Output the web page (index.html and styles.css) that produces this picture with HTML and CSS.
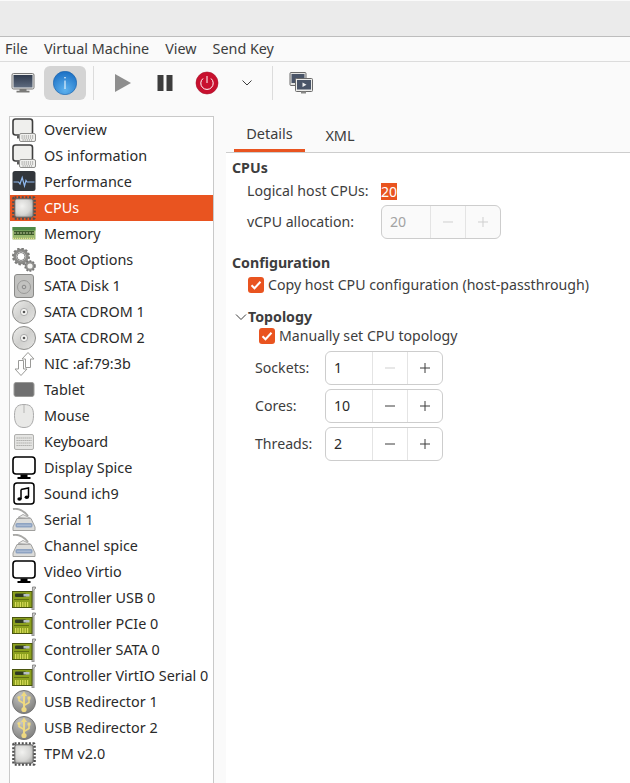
FILE: index.html
```html
<!DOCTYPE html>
<html lang="en">
<head>
<meta charset="utf-8">
<title>Virtual Machine</title>
<link rel="stylesheet" href="styles.css">
</head>
<body>
<svg class="sprite" width="0" height="0">
<defs>
<radialGradient id="gchip" cx=".4" cy=".4" r=".75"><stop offset="0" stop-color="#f2f2f0"/><stop offset=".6" stop-color="#d6d6d4"/><stop offset="1" stop-color="#9f9f9d"/></radialGradient>
<linearGradient id="gdisc" x1="0" y1="0" x2="1" y2="1"><stop offset="0" stop-color="#eeeeec"/><stop offset=".5" stop-color="#d0d0ce"/><stop offset="1" stop-color="#e6e6e4"/></linearGradient>
<linearGradient id="gscreen" x1="0" y1="0" x2="0" y2="1"><stop offset="0" stop-color="#2f3a4d"/><stop offset="1" stop-color="#5d6a7e"/></linearGradient>
<radialGradient id="ginfo" cx=".5" cy=".8" r=".8"><stop offset="0" stop-color="#5fb2ee"/><stop offset="1" stop-color="#1a6fc4"/></radialGradient>
<radialGradient id="gusb" cx=".4" cy=".25" r=".85"><stop offset="0" stop-color="#c6c6c4"/><stop offset="1" stop-color="#787876"/></radialGradient>
<symbol id="i-computer" viewBox="0 0 24 24">
<rect x="1" y="1" width="19.500" height="16" rx="2.500" fill="#efefed" stroke="#3f3f3f" stroke-width="1.600"/>
<path d="M5 17.500h5v3H5z" fill="#5a5a5a"/>
<rect x="7.500" y="15.500" width="16" height="8" rx="1.500" fill="#f1f1ef" stroke="#8f8f8d"/>
<path d="M9.500 18h12.500M9.500 20h12.500M10.500 22h10.500" stroke="#8a8a88" stroke-width="1.100" stroke-dasharray="1.200 .9"/>
</symbol>
<symbol id="i-perf" viewBox="0 0 24 24">
<rect x="0.500" y="1" width="23" height="20" rx="2.500" fill="#32363b"/>
<path d="M1.500 12h5l1.500 2 2.200-6.500 2.300 8.500 1.500-5.500 1 1.500h7.500" fill="none" stroke="#8fb8ee" stroke-width="1.200"/>
</symbol>
<symbol id="i-chip" viewBox="0 0 24 24">
<rect x="1.500" y="1.500" width="21" height="21" rx="1" fill="none" stroke="#4f4f4f" stroke-width="2.600" stroke-dasharray="2 1.600"/>
<rect x="2.800" y="2.800" width="18.400" height="18.400" rx="2" fill="url(#gchip)" stroke="#5c5c5c"/>
</symbol>
<symbol id="i-memory" viewBox="0 0 24 24">
<rect x="0.500" y="5" width="23" height="12.500" rx=".5" fill="#9ab86e"/>
<rect x="0.500" y="5" width="23" height="3.500" fill="#4f8a48"/>
<rect x="2" y="9" width="20" height="4" fill="#3d5a2b"/>
<path d="M2 11h20" stroke="#bfc7a0" stroke-dasharray="2 1"/>
<path d="M1 16.500h22" stroke="#e2dc8e" stroke-dasharray="1 1" stroke-width="1.500"/>
</symbol>
<symbol id="i-gears" viewBox="0 0 24 24">
<circle cx="9" cy="8.500" r="6.200" fill="#f4f4f2" stroke="#8a8a88" stroke-width="3"/>
<circle cx="9" cy="8.500" r="8" fill="none" stroke="#7c7c7a" stroke-width="2" stroke-dasharray="2.400 1.800"/>
<circle cx="9" cy="8.500" r="4" fill="#fff" stroke="#666" stroke-width=".8"/>
<circle cx="18" cy="18" r="3.800" fill="#f4f4f2" stroke="#8f8f8d" stroke-width="2.400"/>
<circle cx="18" cy="18" r="5" fill="none" stroke="#777" stroke-width="1.600" stroke-dasharray="1.800 1.400"/>
</symbol>
<symbol id="i-disk" viewBox="0 0 24 24">
<rect x="2.500" y="0.500" width="19" height="23" rx="2.500" fill="#c2c2c0" stroke="#8a8a88"/>
<circle cx="12" cy="13" r="6.500" fill="none" stroke="#9a9a98"/>
<circle cx="12" cy="13" r="1.800" fill="none" stroke="#888"/>
</symbol>
<symbol id="i-cd" viewBox="0 0 24 24">
<circle cx="12" cy="12" r="11.500" fill="url(#gdisc)" stroke="#8f8f8d"/>
<circle cx="12" cy="12" r="3.600" fill="#f6f6f4" stroke="#aaa"/>
<circle cx="12" cy="12" r="1.300" fill="#555"/>
</symbol>
<symbol id="i-nic" viewBox="0 0 24 24">
<path d="M16 .5l6 6.500h-3.500v8.500h-5V7H10z" fill="#fff" stroke="#9a9a98"/>
<path d="M9 23.500l-6-6.500h3.500V8.500h5V17H15z" fill="#fff" stroke="#9a9a98"/>
</symbol>
<symbol id="i-tablet" viewBox="0 0 24 24">
<rect x="2" y="4.500" width="20" height="14" rx="2" fill="#707070" stroke="#9a9a98"/>
</symbol>
<symbol id="i-mouse" viewBox="0 0 24 24">
<path d="M12 .5c7 0 9.500 3 9.500 11 0 8-3 12-9.500 12S2.500 19.500 2.500 11.500C2.500 3.500 5 .5 12 .5z" fill="#e9e9e7" stroke="#aaa"/>
<path d="M12 1v8" stroke="#b5b5b3"/>
</symbol>
<symbol id="i-keyboard" viewBox="0 0 24 24">
<rect x="2.500" y="4.500" width="19" height="15" rx="1.500" fill="#e4e4e2" stroke="#b0b0ae"/>
<path d="M4.500 8h15M4.500 10.500h15M4.500 13h15M4.500 15.500h15" stroke="#a5a5a3" stroke-width="1.200" stroke-dasharray="1.300 .7"/>
</symbol>
<symbol id="i-display" viewBox="0 0 24 24">
<rect x="1" y="1" width="22" height="17" rx="3" fill="#fff" stroke="#000" stroke-width="1.600"/>
<path d="M8.500 18.500h7v2.500h3v2h-13v-2h3z" fill="#000"/>
</symbol>
<symbol id="i-sound" viewBox="0 0 24 24">
<rect x="2" y="1" width="20" height="21" rx="3" fill="#fff" stroke="#000" stroke-width="1.500"/>
<path d="M9 7.500l7.500-1.500v9" fill="none" stroke="#000" stroke-width="1.500"/>
<path d="M9 7.500v9.500" stroke="#000" stroke-width="1.500"/>
<ellipse cx="7.500" cy="17" rx="2.200" ry="1.700" fill="#000"/>
<ellipse cx="14.800" cy="15.200" rx="2.200" ry="1.700" fill="#000"/>
</symbol>
<symbol id="i-serial" viewBox="0 0 24 24">
<path d="M1 1c5-1 11 2 15 7" fill="none" stroke="#a8a8a6" stroke-width="2"/>
<path d="M5 10.500h14l4 8.500v3.500H1V19z" fill="#dcdcda" stroke="#a0a09e"/>
<path d="M6 9.500l5-3 8 4z" fill="#ececea" stroke="#aaa"/>
<rect x="3.500" y="15" width="17" height="4.500" rx="1.500" fill="#8ea3c2"/>
<path d="M5.500 17.200h13" stroke="#dfe7f2" stroke-dasharray="1 1"/>
</symbol>
<symbol id="i-card" viewBox="0 0 24 24">
<path d="M20.500 1h3v1.500l-1.500 1V24h-2z" fill="#d0d0ce" stroke="#777" stroke-width=".8"/>
<rect x="0.500" y="5.500" width="19.500" height="16" fill="#8ba01e" stroke="#4a5510"/>
<rect x="3" y="7.500" width="11" height="3.500" rx="1" fill="#2f3a22"/>
<rect x="11.500" y="8" width="6" height="2.500" fill="#b7c0c4"/>
<path d="M2 13.500h15" stroke="#5f6e12"/>
<path d="M3 18.500h14" stroke="#d9dc5a" stroke-width="5" stroke-dasharray="1.200 1.200"/>
</symbol>
<symbol id="i-usb" viewBox="0 0 24 24">
<circle cx="12" cy="12" r="11.500" fill="url(#gusb)" stroke="#777"/>
<path d="M12 3v16" stroke="#eed981" stroke-width="2"/>
<path d="M12 1.500l3 4.500H9z" fill="#eed981"/>
<circle cx="12" cy="19.500" r="2.600" fill="#eed981"/>
<path d="M12 15.500l5-3V9M12 13.500L7 10.500V8" fill="none" stroke="#eed981" stroke-width="1.500"/>
<rect x="15.500" y="6.500" width="3" height="3" fill="#eed981"/>
<circle cx="7" cy="7.500" r="1.600" fill="#eed981"/>
</symbol>
</defs>
</svg>

<header class="titlebar"></header>

<nav class="menubar">
  <span class="menu-item">File</span>
  <span class="menu-item">Virtual Machine</span>
  <span class="menu-item">View</span>
  <span class="menu-item">Send Key</span>
</nav>

<div class="toolbar">
  <button class="tool">
    <svg class="tool-icon" viewBox="0 0 24 24"><rect x="1" y="2.500" width="22" height="15.500" rx="1.500" fill="#ececea" stroke="#777"/><rect x="2.500" y="4" width="19" height="12.500" fill="url(#gscreen)"/><path d="M8.500 18h7v1.800h3V21.500h-13V19.800h3z" fill="#7a7a78"/></svg>
  </button>
  <button class="tool tool-active">
    <svg class="tool-icon" viewBox="0 0 24 24"><circle cx="12" cy="12" r="11.700" fill="url(#ginfo)" stroke="#1a5fa8" stroke-width=".6"/><path d="M12 9.500V18" stroke="#fff" stroke-width="1"/><circle cx="12" cy="6.800" r=".8" fill="#fff"/></svg>
  </button>
  <span class="tool-sep"></span>
  <button class="tool tool-wide">
    <svg class="tool-icon" viewBox="0 0 24 24"><path d="M4 3l16 9-16 9z" fill="#8e8e8e"/></svg>
  </button>
  <button class="tool">
    <svg class="tool-icon" viewBox="0 0 24 24"><path d="M4.500 4h6v16h-6zM13.500 4h6v16h-6z" fill="#3d3d3d"/></svg>
  </button>
  <button class="tool">
    <svg class="tool-icon" viewBox="0 0 24 24"><circle cx="12" cy="12" r="11" fill="#c8102e" stroke="#a50d25" stroke-width=".6"/><path d="M8 7.500a6.200 6.200 0 1 0 8 0" fill="none" stroke="#fff" stroke-width="1"/><path d="M12 5v7" stroke="#fff" stroke-width="1"/></svg>
  </button>
  <button class="tool tool-narrow">
    <svg class="chevron-icon" viewBox="0 0 12 12"><path d="M1.500 3.500L6 8l4.500-4.500" fill="none" stroke="#3d3d3d" stroke-width="1"/></svg>
  </button>
  <span class="tool-sep"></span>
  <button class="tool">
    <svg class="tool-icon" viewBox="0 0 24 24"><rect x="1" y="1.500" width="16" height="13" rx="1" fill="#e4e4e2" stroke="#6a6a6a"/><rect x="2.500" y="3" width="13" height="9" fill="#4a5568"/><rect x="6.500" y="7.500" width="17" height="13" rx="1" fill="#ececea" stroke="#6a6a6a"/><rect x="8" y="9" width="14" height="9.500" fill="#4a5568"/><path d="M13.500 11.500l4 2.200-4 2.200z" fill="#f0f0f0"/><path d="M12 20.500h5v2h-5z" fill="#8a8a88"/></svg>
  </button>
</div>

<div class="workspace">
  <aside class="hw-list">
    <div class="hw-row"><svg class="hw-icon"><use href="#i-computer"/></svg><span>Overview</span></div>
    <div class="hw-row"><svg class="hw-icon"><use href="#i-computer"/></svg><span>OS information</span></div>
    <div class="hw-row"><svg class="hw-icon"><use href="#i-perf"/></svg><span>Performance</span></div>
    <div class="hw-row hw-selected"><svg class="hw-icon"><use href="#i-chip"/></svg><span>CPUs</span></div>
    <div class="hw-row"><svg class="hw-icon"><use href="#i-memory"/></svg><span>Memory</span></div>
    <div class="hw-row"><svg class="hw-icon"><use href="#i-gears"/></svg><span>Boot Options</span></div>
    <div class="hw-row"><svg class="hw-icon"><use href="#i-disk"/></svg><span>SATA Disk 1</span></div>
    <div class="hw-row"><svg class="hw-icon"><use href="#i-cd"/></svg><span>SATA CDROM 1</span></div>
    <div class="hw-row"><svg class="hw-icon"><use href="#i-cd"/></svg><span>SATA CDROM 2</span></div>
    <div class="hw-row"><svg class="hw-icon"><use href="#i-nic"/></svg><span>NIC :af:79:3b</span></div>
    <div class="hw-row"><svg class="hw-icon"><use href="#i-tablet"/></svg><span>Tablet</span></div>
    <div class="hw-row"><svg class="hw-icon"><use href="#i-mouse"/></svg><span>Mouse</span></div>
    <div class="hw-row"><svg class="hw-icon"><use href="#i-keyboard"/></svg><span>Keyboard</span></div>
    <div class="hw-row"><svg class="hw-icon"><use href="#i-display"/></svg><span>Display Spice</span></div>
    <div class="hw-row"><svg class="hw-icon"><use href="#i-sound"/></svg><span>Sound ich9</span></div>
    <div class="hw-row"><svg class="hw-icon"><use href="#i-serial"/></svg><span>Serial 1</span></div>
    <div class="hw-row"><svg class="hw-icon"><use href="#i-serial"/></svg><span>Channel spice</span></div>
    <div class="hw-row"><svg class="hw-icon"><use href="#i-display"/></svg><span>Video Virtio</span></div>
    <div class="hw-row"><svg class="hw-icon"><use href="#i-card"/></svg><span>Controller USB 0</span></div>
    <div class="hw-row"><svg class="hw-icon"><use href="#i-card"/></svg><span>Controller PCIe 0</span></div>
    <div class="hw-row"><svg class="hw-icon"><use href="#i-card"/></svg><span>Controller SATA 0</span></div>
    <div class="hw-row"><svg class="hw-icon"><use href="#i-card"/></svg><span>Controller VirtIO Serial 0</span></div>
    <div class="hw-row"><svg class="hw-icon"><use href="#i-usb"/></svg><span>USB Redirector 1</span></div>
    <div class="hw-row"><svg class="hw-icon"><use href="#i-usb"/></svg><span>USB Redirector 2</span></div>
    <div class="hw-row"><svg class="hw-icon"><use href="#i-chip"/></svg><span>TPM v2.0</span></div>
  </aside>

  <main class="notebook">
    <div class="tabs">
      <span class="tab tab-active">Details</span>
      <span class="tab">XML</span>
    </div>
    <div class="page">
      <h2 class="section-title">CPUs</h2>
      <div class="cpu-grid">
        <span class="field-label">Logical host CPUs:</span>
        <span class="host-count"><span class="highlight">20</span></span>
        <span class="field-label">vCPU allocation:</span>
        <div class="spin spin-disabled spin-wide">
          <span class="spin-value">20</span>
          <span class="spin-btn"><svg class="spin-glyph" viewBox="0 0 12 12"><path d="M1 6h10"/></svg></span>
          <span class="spin-btn"><svg class="spin-glyph" viewBox="0 0 12 12"><path d="M1 6h10M6 1v10"/></svg></span>
        </div>
      </div>

      <h2 class="section-title section-config">Configuration</h2>
      <label class="check-row check-config">
        <span class="checkbox"><svg viewBox="0 0 16 16"><path d="M3.500 8.300l3 3 6-6.500"/></svg></span>
        <span>Copy host CPU configuration (host-passthrough)</span>
      </label>

      <div class="expander">
        <svg class="expander-arrow" viewBox="0 0 12 12"><path d="M1 3.500L6 8.500l5-5"/></svg>
        <h2 class="section-title">Topology</h2>
      </div>
      <div class="topology">
        <label class="check-row">
          <span class="checkbox"><svg viewBox="0 0 16 16"><path d="M3.500 8.300l3 3 6-6.500"/></svg></span>
          <span>Manually set CPU topology</span>
        </label>
        <div class="topo-grid">
          <span class="field-label">Sockets:</span>
          <div class="spin">
            <span class="spin-value">1</span>
            <span class="spin-btn spin-btn-off"><svg class="spin-glyph" viewBox="0 0 12 12"><path d="M1 6h10"/></svg></span>
            <span class="spin-btn"><svg class="spin-glyph" viewBox="0 0 12 12"><path d="M1 6h10M6 1v10"/></svg></span>
          </div>
          <span class="field-label">Cores:</span>
          <div class="spin">
            <span class="spin-value">10</span>
            <span class="spin-btn"><svg class="spin-glyph" viewBox="0 0 12 12"><path d="M1 6h10"/></svg></span>
            <span class="spin-btn"><svg class="spin-glyph" viewBox="0 0 12 12"><path d="M1 6h10M6 1v10"/></svg></span>
          </div>
          <span class="field-label">Threads:</span>
          <div class="spin">
            <span class="spin-value">2</span>
            <span class="spin-btn"><svg class="spin-glyph" viewBox="0 0 12 12"><path d="M1 6h10"/></svg></span>
            <span class="spin-btn"><svg class="spin-glyph" viewBox="0 0 12 12"><path d="M1 6h10M6 1v10"/></svg></span>
          </div>
        </div>
      </div>
    </div>
  </main>
</div>
</body>
</html>
```

FILE: styles.css
```css
* { box-sizing: border-box; }
html, body { height: 100%; }
body {
  margin: 0;
  height: 783px;
  overflow: hidden;
  display: flex;
  flex-direction: column;
  background: #fafafa;
  color: #3d3d3d;
  font-family: "Noto Sans", "Open Sans", sans-serif;
  font-size: 14.15px;
  line-height: 20px;
}
.sprite { position: absolute; }

.titlebar {
  height: 37px;
  flex: none;
  background: #ebebeb;
  border-top: 1px solid #fafafa;
  border-bottom: 1px solid #bdbdbd;
}

.menubar {
  height: 25px;
  flex: none;
  display: flex;
  align-items: center;
  gap: 16px;
  padding-left: 5px;
  font-size: 14.35px;
  background: #fafafa;
  border-bottom: 1px solid #dcdcdc;
}

.toolbar {
  height: 54px;
  flex: none;
  display: flex;
  align-items: flex-start;
  padding: 4px 0 0 2px;
}
.tool {
  width: 42px;
  height: 34px;
  padding: 0;
  border: 0;
  border-radius: 6px;
  background: transparent;
  display: flex;
  align-items: center;
  justify-content: center;
}
.tool-active { background: #d4d4d4; }
.tool-wide { width: 43px; }
.tool-narrow { width: 37px; }
.tool-icon { width: 24px; height: 24px; }
.chevron-icon { width: 12px; height: 12px; }
.tool-sep {
  width: 1px;
  height: 34px;
  background: #dcdcdc;
  margin: 0 7px;
}

.workspace {
  flex: 1;
  min-height: 0;
  display: flex;
  padding-left: 9px;
}

.hw-list {
  width: 205px;
  flex: none;
  background: #fff;
  border: 1px solid #c9c9c9;
  border-bottom: 0;
  color: #2a2a2a;
  font-size: 14.4px;
}
.hw-row {
  height: 26px;
  display: flex;
  align-items: center;
  gap: 8px;
  padding-left: 2px;
  white-space: nowrap;
}
.hw-icon { width: 24px; height: 24px; flex: none; }
.hw-selected { background: #e95420; color: #fff; }

.notebook {
  flex: 1;
  margin-left: 12px;
  display: flex;
  flex-direction: column;
  min-width: 0;
}
.tabs {
  height: 37px;
  flex: none;
  display: flex;
  gap: 6px;
  padding-left: 8px;
  font-size: 14.5px;
  border-bottom: 1px solid #cdcdcd;
}
.tab {
  width: 71px;
  height: 36px;
  padding-top: 1px;
  display: flex;
  align-items: center;
  justify-content: center;
  color: #3d3d3d;
}
.tab + .tab { width: 48px; margin-left: 5px; }
.tab-active { border-bottom: 3px solid #e95420; }

.page {
  flex: 1;
  background: #fff;
  padding: 5px 0 0 6px;
}
.section-title {
  margin: 0;
  font-size: 14.2px;
  line-height: 20px;
  font-weight: 700;
  color: #3d3d3d;
}
.section-config { margin-top: 14px; }

.cpu-grid {
  display: grid;
  grid-template-columns: 134px auto;
  justify-content: start;
  align-items: center;
  row-gap: 4px;
  margin: 3px 0 0 15px;
}
.highlight {
  display: inline-block;
  background: #e95420;
  color: #fff;
  height: 17px;
  line-height: 17px;
  width: 16px;
  text-align: center;
}
.host-count { display: flex; }
.field-label { color: #3d3d3d; }

.spin {
  width: 118px;
  height: 34px;
  display: flex;
  align-items: stretch;
  background: #fff;
  border: 1px solid #cdcdcd;
  border-radius: 6px;
  color: #2a2a2a;
}
.spin-wide { width: 120px; }
.spin-value {
  flex: 1;
  padding-left: 8px;
  display: flex;
  align-items: center;
}
.spin-btn {
  width: 35px;
  flex: none;
  border-left: 1px solid #e4e4e4;
  display: flex;
  align-items: center;
  justify-content: center;
}
.spin-glyph { width: 12px; height: 12px; }
.spin-glyph path { stroke: #3d3d3d; stroke-width: 1; fill: none; }
.spin-btn-off .spin-glyph path { stroke: #cfcfcf; }
.spin-disabled { background: #fafafa; color: #a3a3a3; }
.spin-disabled .spin-glyph path { stroke: #cfcfcf; }

.check-row {
  display: flex;
  align-items: center;
  gap: 4px;
  height: 20px;
}
.check-config { margin: 2px 0 0 16px; }
.checkbox {
  width: 16px;
  height: 16px;
  flex: none;
  background: #e95420;
  border-radius: 3px;
  display: flex;
}
.checkbox svg { width: 16px; height: 16px; }
.checkbox path { fill: none; stroke: #fff; stroke-width: 2; }

.expander {
  display: flex;
  align-items: center;
  gap: 1px;
  margin: 12px 0 0 3px;
}
.expander-arrow { width: 12px; height: 12px; flex: none; }
.expander-arrow path { fill: none; stroke: #3d3d3d; stroke-width: 1; }

.topology { margin-left: 27px; margin-top: -1px; }
.topo-grid {
  display: grid;
  grid-template-columns: 70px auto;
  justify-content: start;
  align-items: center;
  row-gap: 4px;
  margin: 5px 0 0 -4px;
}
```
